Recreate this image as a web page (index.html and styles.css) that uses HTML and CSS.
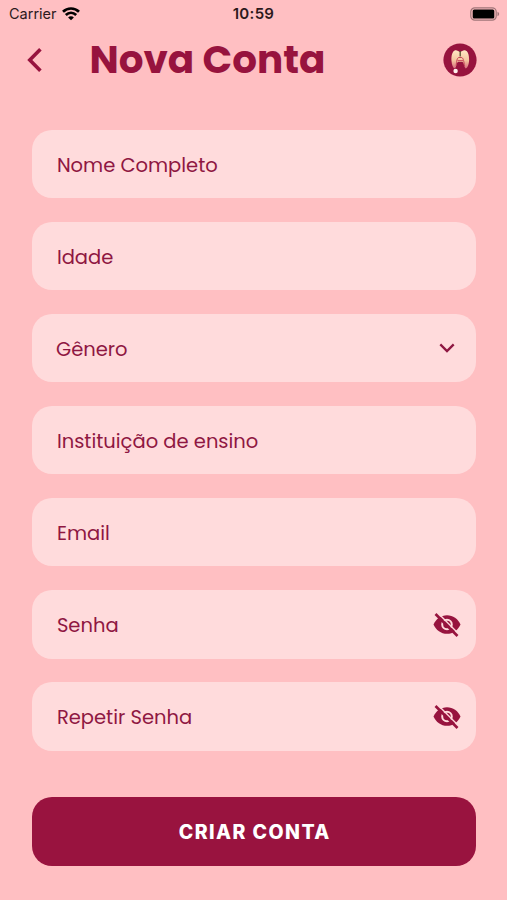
FILE: index.html
```html
<!DOCTYPE html>
<html lang="pt-BR">

<head>
  <meta charset="UTF-8" />
  <meta name="viewport" content="width=device-width, initial-scale=1.0" />
  <title>Nova Conta</title>
  <link rel="stylesheet" href="styles.css">
</head>

<body>
  <!-- Barra de status -->
  <div class="status-bar">
    <div class="carrier">
      <span class="carrier-name">Carrier</span>
      <svg class="wifi" viewBox="0 0 18 14" fill="none" stroke="#000" stroke-width="2.7">
        <path d="M1 4.7C5.4.4 12.6.4 17 4.7" />
        <path d="M3.8 8.1C6.9 5.2 11.1 5.2 14.2 8.1" />
        <path d="M6.1 10.4C7.7 8.9 10.3 8.9 11.9 10.4L9 13.3Z" fill="#000" stroke="none" />
      </svg>
    </div>
    <span class="time">10:59</span>
    <svg class="battery" viewBox="0 0 30 14">
      <rect x=".8" y=".8" width="25.4" height="12.4" rx="4" fill="none" stroke="#a07578" stroke-width="1.2" />
      <rect x="2.7" y="2.5" width="21.6" height="9" rx="1.5" fill="#000" />
      <path d="M27.5 4.8C29.7 5.7 29.7 8.3 27.5 9.2Z" fill="#a07578" />
    </svg>
  </div>

  <header class="header">
    <button class="back-button" aria-label="Voltar">
      <svg viewBox="0 0 16 24" fill="none" stroke="#97133e" stroke-width="3.6">
        <path d="M13.4 1.3L2.8 12L13.4 22.7" />
      </svg>
    </button>
    <h1 class="title">Nova Conta</h1>
    <!-- Logo: dente com raiz -->
    <svg class="logo" viewBox="0 0 34 34">
      <defs>
        <linearGradient id="tooth" x1="0" y1="0" x2="0" y2="1">
          <stop offset="0" stop-color="#ffe9c4" />
          <stop offset=".55" stop-color="#f5c6a0" />
          <stop offset="1" stop-color="#d5697d" />
        </linearGradient>
      </defs>
      <circle cx="17" cy="17" r="16.6" fill="#97133e" />
      <path d="M12.2 7.3C9.3 8 8.1 13 8.5 18C8.8 22 10 25 11.7 25.6C13.4 24.8 13.3 20.1 15 18.8H19.5C21 20.1 21.3 24.8 22.8 25.4C24.8 24.8 26 21 26.1 17C26.2 12 24.9 8 22 7.3C20.2 6.9 18.8 8.2 17.2 9.2C15.5 8.2 14 6.9 12.2 7.3Z" fill="url(#tooth)" />
      <path d="M17.2 8V13.5" stroke="#55502f" stroke-width="1.3" />
      <path d="M13.2 23C13.4 18 14.2 15.1 15.6 14.5H18.8C20.4 15.2 21.1 19 21.4 23" fill="none" stroke="#bd354f" stroke-width=".9" />
      <path d="M14.5 17.5H20" stroke="#cf5864" stroke-width="1" />
      <circle cx="12.6" cy="28" r="2.2" fill="#fff1ed" />
    </svg>
  </header>

  <main class="form">
    <div class="field"><span class="label">Nome Completo</span></div>
    <div class="field"><span class="label">Idade</span></div>
    <div class="field select">
      <span class="label">Gênero</span>
      <svg class="chevron" viewBox="0 0 16 10" fill="none" stroke="#8f1742" stroke-width="2.3">
        <path d="M1.3 1.4L8 8.1L14.7 1.4" />
      </svg>
    </div>
    <div class="field"><span class="label">Instituição de ensino</span></div>
    <div class="field"><span class="label">Email</span></div>
    <div class="field">
      <span class="label">Senha</span>
      <svg class="eye" viewBox="0 0 28 24">
        <path d="M.5 11.5C3 5.8 8 2.2 14 2.2S25 5.8 27.5 11.5C25 17.2 20 20.8 14 20.8S3 17.2.5 11.5Z" fill="#97133e" />
        <circle cx="14" cy="11.5" r="4.8" fill="none" stroke="#ffdbdc" stroke-width="2" />
        <path d="M4.6-.3L26.3 21.4" stroke="#ffdbdc" stroke-width="1.4" />
        <path d="M2.5 1L24.5 23" stroke="#97133e" stroke-width="2.6" />
      </svg>
    </div>
    <div class="field">
      <span class="label">Repetir Senha</span>
      <svg class="eye" viewBox="0 0 28 24">
        <path d="M.5 11.5C3 5.8 8 2.2 14 2.2S25 5.8 27.5 11.5C25 17.2 20 20.8 14 20.8S3 17.2.5 11.5Z" fill="#97133e" />
        <circle cx="14" cy="11.5" r="4.8" fill="none" stroke="#ffdbdc" stroke-width="2" />
        <path d="M4.6-.3L26.3 21.4" stroke="#ffdbdc" stroke-width="1.4" />
        <path d="M2.5 1L24.5 23" stroke="#97133e" stroke-width="2.6" />
      </svg>
    </div>
    <button class="submit">CRIAR CONTA</button>
  </main>
</body>

</html>
```
FILE: styles.css
```css
* {
  box-sizing: border-box;
}

body {
  margin: 0;
  height: 900px;
  overflow: hidden;
  background: #ffbfc2;
  color: #8f1742;
  font-family: Poppins, Inter, sans-serif;
}

button {
  border: none;
  padding: 0;
  cursor: pointer;
}

svg {
  display: block;
}

.status-bar {
  display: grid;
  grid-template-columns: 1fr auto 1fr;
  align-items: center;
  height: 27px;
  padding: 0 7px 0 9px;
  color: #2c191c;
  font-family: Inter, sans-serif;
  font-size: 14.5px;
}

.carrier {
  display: flex;
  align-items: center;
  gap: 6px;
}

.carrier-name {
  width: 47px;
  white-space: nowrap;
}

.wifi {
  width: 18px;
  height: 14px;
}

.time {
  margin-right: 2px;
  font-size: 15px;
  font-weight: 600;
  letter-spacing: 0.3px;
}

.battery {
  width: 30px;
  height: 14px;
  justify-self: end;
}

.header {
  display: flex;
  align-items: center;
  height: 65px;
  padding: 0 30px 0 27px;
}

.back-button {
  width: 16px;
  height: 24px;
  background: none;
}

.back-button svg {
  width: 16px;
  height: 24px;
}

.title {
  margin: 0 0 0 46.5px;
  font-size: 38.9px;
  font-weight: 700;
  line-height: 48px;
  white-space: nowrap;
  color: #97133e;
}

.logo {
  width: 34px;
  height: 34px;
  margin-left: auto;
}

.form {
  display: flex;
  flex-direction: column;
  gap: 23.6px;
  padding: 37.6px 31px 0 31.5px;
}

.field {
  display: flex;
  align-items: center;
  justify-content: space-between;
  height: 68.5px;
  padding: 0 15px 0 25.4px;
  border-radius: 20px;
  background: #ffdbdc;
}

.field.select {
  padding-left: 24.5px;
}

.label {
  padding-top: 2.6px;
  font-size: 19.5px;
  white-space: nowrap;
}

.chevron {
  width: 16px;
  height: 10px;
  margin-right: 6px;
}

.eye {
  width: 28px;
  height: 24px;
  margin-top: 1.4px;
}

.submit {
  height: 68.5px;
  margin-top: 23px;
  padding-left: 2px;
  border-radius: 20px;
  background: #99133f;
  color: #fff;
  font-family: Inter, sans-serif;
  font-size: 19.5px;
  font-weight: 800;
  letter-spacing: 1.45px;
}
```
